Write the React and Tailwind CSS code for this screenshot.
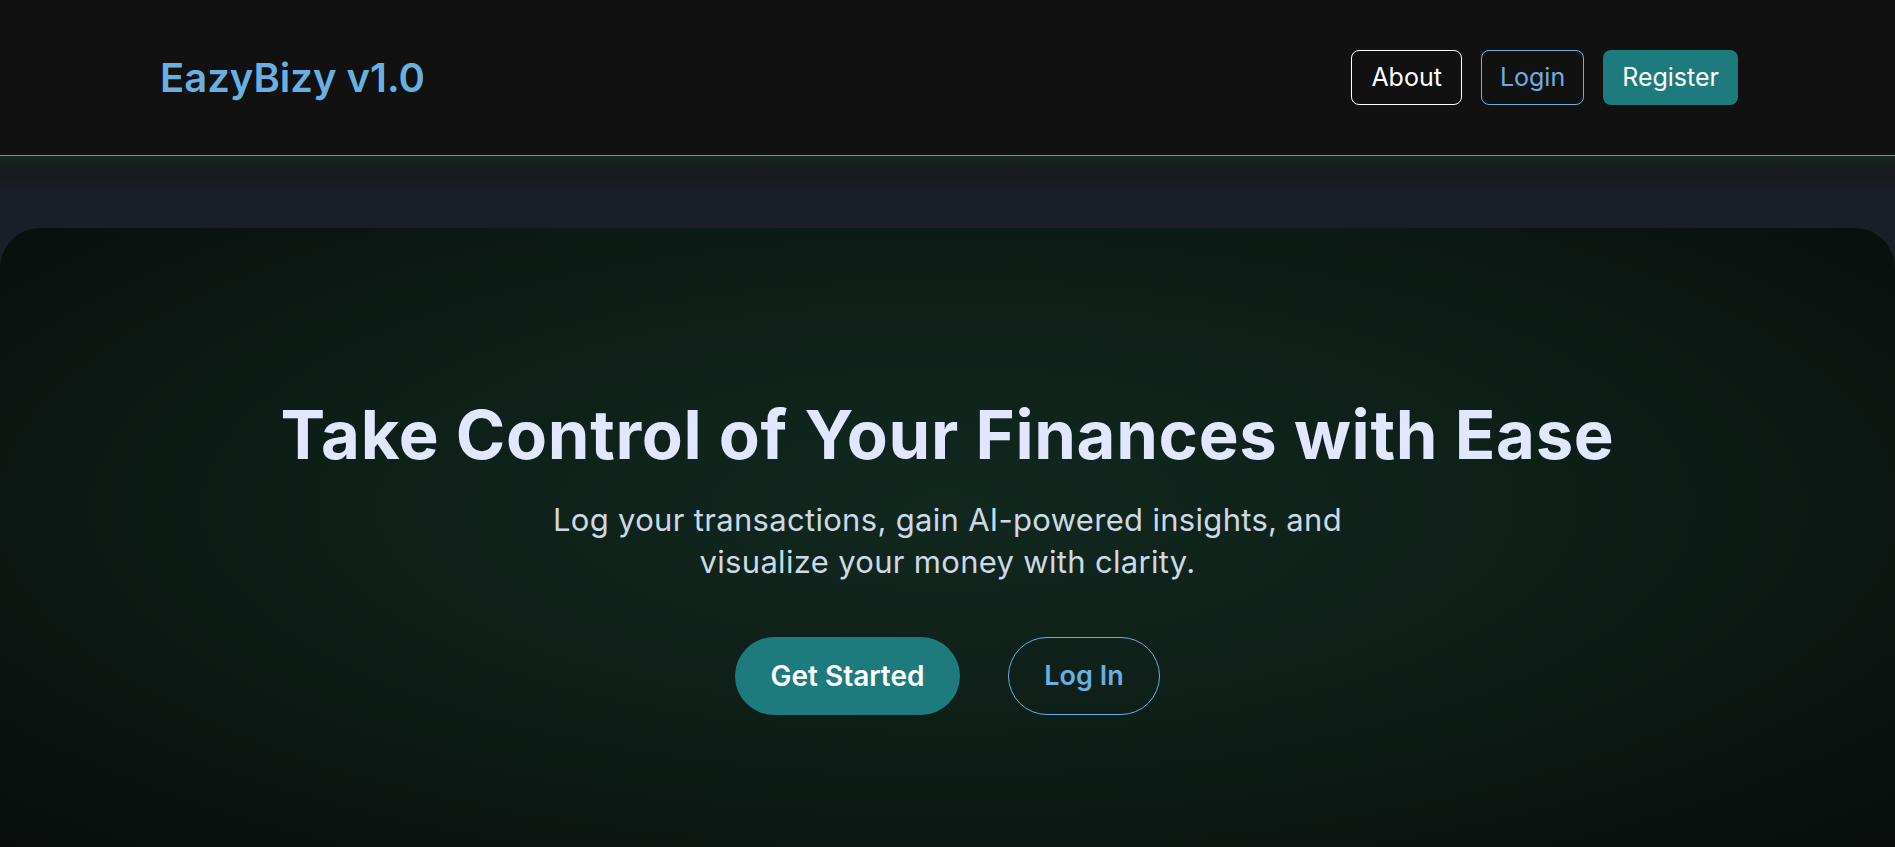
export default function App() {
  return (
    <div
      className="min-h-screen bg-[#111111] text-white overflow-hidden"
      style={{ fontFamily: "Inter, 'Open Sans', sans-serif" }}
    >
      {/* NAVBAR */}
      <header className="h-[156px] flex items-center justify-between pl-[160px] pr-[157px] bg-[#111111] border-b border-[#38b2ac]">
        <h1 className="text-[40px] font-semibold text-[#69b0e1]">EazyBizy v1.0</h1>

        <nav className="flex items-center gap-[19px]">
          <button className="h-[55px] px-[19px] text-[25px] border border-white rounded-lg text-white">
            About
          </button>
          <button className="h-[55px] px-[18px] text-[25px] border border-[#69b0e1] rounded-lg text-[#69b0e1]">
            Login
          </button>
          <button className="h-[55px] px-[19px] text-[25px] bg-[#1e7b7d] rounded-lg text-white">
            Register
          </button>
        </nav>
      </header>

      {/* HERO */}
      <section className="pt-[72px] bg-[linear-gradient(to_bottom,#15261f_0px,#18191d_14px,#1a1e27_35px,#1e293b_100%)]">
        <div className="h-[620px] rounded-t-[40px] bg-[radial-gradient(ellipse_at_50%_45%,#11281f_0%,#0e1f18_45%,#080d0b_100%)] flex flex-col items-center pt-[167px]">
          <h2 className="text-[67px] leading-[1.2] font-bold tracking-[0.01em] text-[#e0e7ff]">
            Take Control of Your Finances with Ease
          </h2>

          <p className="mt-[24px] text-[31px] leading-[42px] tracking-[0.01em] text-[#cdd9e5] text-center">
            Log your transactions, gain AI-powered insights, and
            <br />
            visualize your money with clarity.
          </p>

          <div className="mt-[54px] flex gap-[48px]">
            <button className="h-[78px] w-[225px] rounded-full bg-[#1e7b7d] text-white text-[28px] font-semibold">
              Get Started
            </button>
            <button className="h-[78px] w-[152px] rounded-full border border-[#69b0e1] text-[#69b0e1] text-[27px] font-semibold">
              Log In
            </button>
          </div>
        </div>
      </section>
    </div>
  );
}
